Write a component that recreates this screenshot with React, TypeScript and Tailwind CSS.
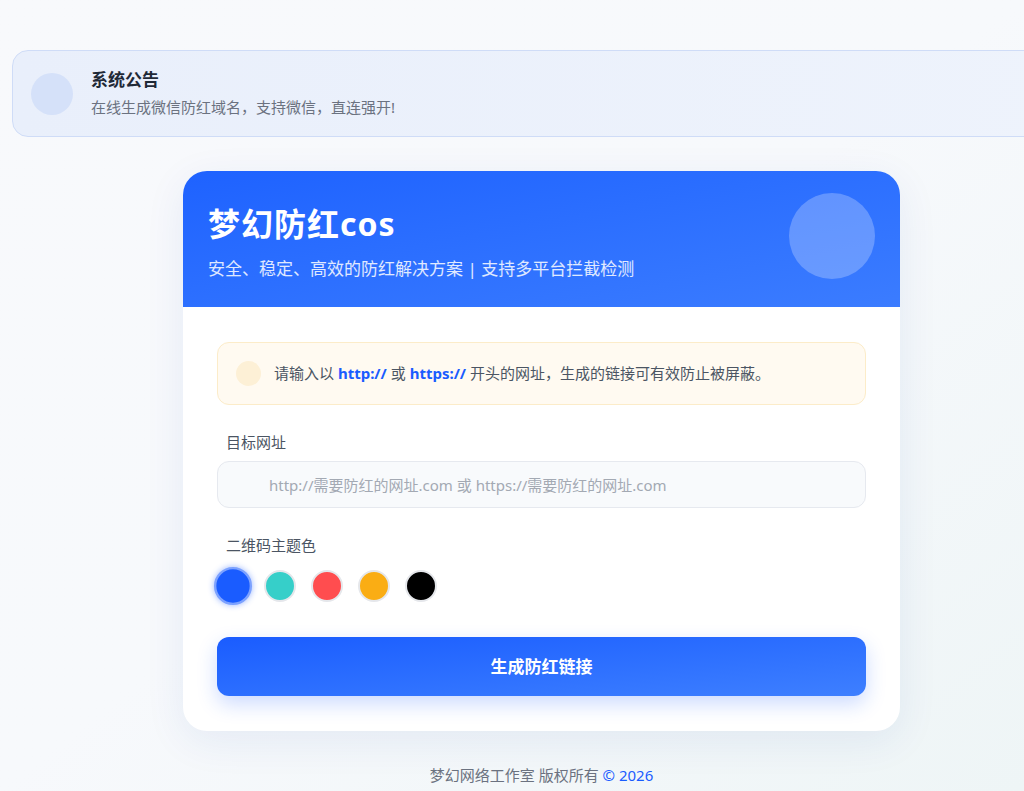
import React, { useState } from "react";

const swatches = ["#1a5cff", "#36cfc9", "#ff4d4f", "#faad14", "#000000"];

function App() {
  const [active, setActive] = useState(0);
  const [url, setUrl] = useState("");

  return (
    <div
      className="min-h-screen overflow-x-hidden bg-gradient-to-br from-[#f8f9fc] via-[#f7f9fc] to-[#eef5f6]"
      style={{ fontFamily: '"Noto Sans", "Noto Sans CJK SC", sans-serif' }}
    >
      <div className="w-[1059px] ml-3 pt-[50px] flex flex-col items-center">
        {/* Notice */}
        <div className="w-full h-[87px] flex items-center gap-[18px] pl-[18px] rounded-2xl border border-[#cfdcf7] bg-gradient-to-r from-[#e9effb] to-[#eef3fc]">
          <div className="w-[42px] h-[42px] rounded-full bg-[#d5e1f9] shrink-0" />
          <div className="flex flex-col">
            <div className="text-[17px] leading-[22px] font-bold text-[#1f2937]">系统公告</div>
            <div className="text-[15px] leading-[22px] mt-[5px] text-[#6b7280]">
              在线生成微信防红域名，支持微信，直连强开!
            </div>
          </div>
        </div>

        {/* Card */}
        <div className="mt-[34px] w-[717px] rounded-[24px] bg-white shadow-[0_10px_40px_rgba(30,70,160,0.08)] overflow-hidden">
          <div className="relative h-[136px] bg-gradient-to-br from-[#1e62ff] to-[#3b7cff] pl-[25px] pt-[33px]">
            <div className="text-[32px] leading-[40px] font-bold text-white tracking-[1px]">梦幻防红cos</div>
            <div className="mt-[14px] text-[17px] leading-[22px] text-white/85">
              安全、稳定、高效的防红解决方案 | 支持多平台拦截检测
            </div>
            <div className="absolute right-[25px] top-[22px] w-[86px] h-[86px] rounded-full bg-white/25" />
          </div>

          <div className="px-[34px] pt-[35px] pb-[35px]">
            <div className="h-[63px] flex items-center gap-[13px] pl-[18px] rounded-xl border border-[#fcecc9] bg-[#fffaf1]">
              <div className="w-[25px] h-[25px] rounded-full bg-[#fdf0d6] shrink-0" />
              <div className="text-[15px] text-[#4b5563]">
                请输入以 <span className="font-bold text-[#1a5cff]">http://</span> 或{" "}
                <span className="font-bold text-[#1a5cff]">https://</span> 开头的网址，生成的链接可有效防止被屏蔽。
              </div>
            </div>

            <div className="mt-[27px] pl-[9px] text-[15px] leading-[20px] text-[#4b5563]">目标网址</div>
            <input
              value={url}
              onChange={(e) => setUrl(e.target.value)}
              placeholder="http://需要防红的网址.com 或 https://需要防红的网址.com"
              className="mt-[9px] w-full h-[47px] rounded-xl border border-[#e6e9ef] bg-[#f8fafc] pl-[51px] text-[15px] text-[#374151] placeholder:text-[#a3a9b3] outline-none"
            />

            <div className="mt-[27px] pl-[9px] text-[15px] leading-[20px] text-[#4b5563]">二维码主题色</div>
            <div className="mt-[15px] flex items-center gap-[15px]">
              {swatches.map((c, i) => (
                <button
                  key={c}
                  onClick={() => setActive(i)}
                  className={
                    i === active
                      ? "w-[32px] h-[32px] rounded-full border-2 border-[#7da2ff] scale-[1.19] shadow-[0_0_5px_rgba(26,92,255,0.45)]"
                      : "w-[32px] h-[32px] rounded-full border-2 border-[#e5e7eb]"
                  }
                  style={{ backgroundColor: c }}
                />
              ))}
            </div>

            <button className="mt-[35px] w-full h-[59px] rounded-xl bg-gradient-to-br from-[#1a5cff] to-[#3e7fff] text-white text-[17px] font-bold shadow-[0_8px_20px_rgba(26,92,255,0.22)]">
              生成防红链接
            </button>
          </div>
        </div>

        <div className="mt-[33px] text-[15px] text-[#6b7280]">
          梦幻网络工作室 版权所有 <span className="text-[#1a5cff]">© 2026</span>
        </div>
      </div>
    </div>
  );
}

export default App;
